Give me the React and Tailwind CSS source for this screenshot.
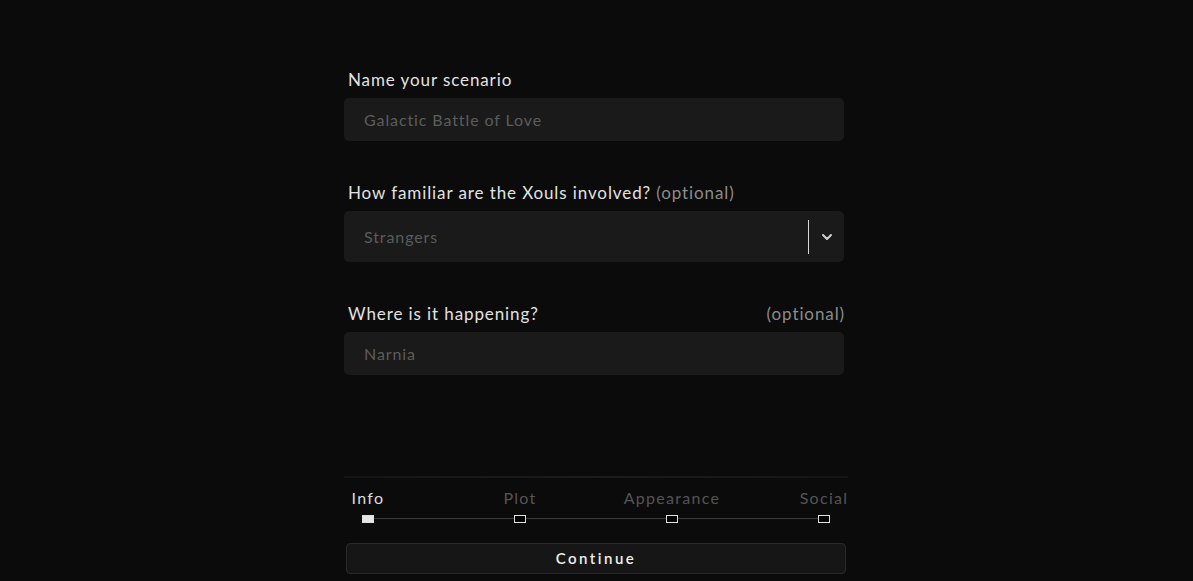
import React from 'react';
import { ChevronDown } from 'lucide-react';

const STEPS = ['Info', 'Plot', 'Appearance', 'Social'];

const font = { fontFamily: 'Lato, "Noto Sans", sans-serif' };

function Label({ children, right }) {
  return (
    <div className="flex items-center justify-between px-1 h-6 text-[17px] text-[#e2e2e2] tracking-[0.9px]">
      <span>{children}</span>
      {right && <span className="text-[#8c8c8c]">{right}</span>}
    </div>
  );
}

function TextInput({ placeholder }) {
  return (
    <div className="mt-1.5 h-[43px] w-[500px] rounded-[5px] bg-[#1a1a1a] flex items-center px-5 text-[16px] text-[#5c5c5c] tracking-[0.9px]">
      {placeholder}
    </div>
  );
}

export default function App() {
  return (
    <div className="w-full h-[581px] bg-[#0b0b0b] overflow-hidden" style={font}>
      <div className="w-[505px] mx-auto pt-[68px] flex flex-col">
        <Label>Name your scenario</Label>
        <TextInput placeholder="Galactic Battle of Love" />

        <div className="mt-10">
          <Label>
            How familiar are the Xouls involved? <span className="text-[#8c8c8c]">(optional)</span>
          </Label>
        </div>
        <div className="mt-1.5 h-[51px] w-[500px] rounded-[5px] bg-[#1a1a1a] flex items-center pl-5 text-[16px] text-[#5c5c5c] tracking-[0.9px]">
          <span className="flex-1">Strangers</span>
          <div className="h-[34px] w-px bg-[#d8d8d8]" />
          <div className="w-[35px] flex justify-center text-[#d0d0d0]">
            <ChevronDown size={16} strokeWidth={3} />
          </div>
        </div>

        <div className="mt-10">
          <Label right="(optional)">Where is it happening?</Label>
        </div>
        <TextInput placeholder="Narnia" />

        <div className="mt-[101px] h-[2px] w-[504px] bg-gradient-to-r from-[#151515] via-[#1c1c1c] to-[#151515]" />

        <div className="mt-2 w-[504px] flex justify-between">
          {STEPS.map((s, i) => (
            <div key={s} className="w-12 flex justify-center">
              <span className={`whitespace-nowrap text-[16px] leading-6 tracking-[1.3px] ${i === 0 ? 'text-[#dcdcdc]' : 'text-[#555555]'}`}>{s}</span>
            </div>
          ))}
        </div>
        <div className="relative mt-[5px] w-[504px] flex justify-between">
          <div className="absolute left-6 right-6 top-[3px] h-px bg-[#3a3a3a]" />
          {STEPS.map((s, i) => (
            <div key={s} className="relative w-12 flex justify-center">
              <div className={`w-3 h-2 border border-[#e0e0e0] ${i === 0 ? 'bg-[#e6e6e6]' : 'bg-black'}`} />
            </div>
          ))}
        </div>

        <button className="mt-5 ml-0.5 h-[31px] w-[500px] rounded-[4px] bg-[#161616] border border-[#2a2a2a] text-[15px] font-semibold text-[#eeeeee] tracking-[2.5px]">
          Continue
        </button>
      </div>
    </div>
  );
}
